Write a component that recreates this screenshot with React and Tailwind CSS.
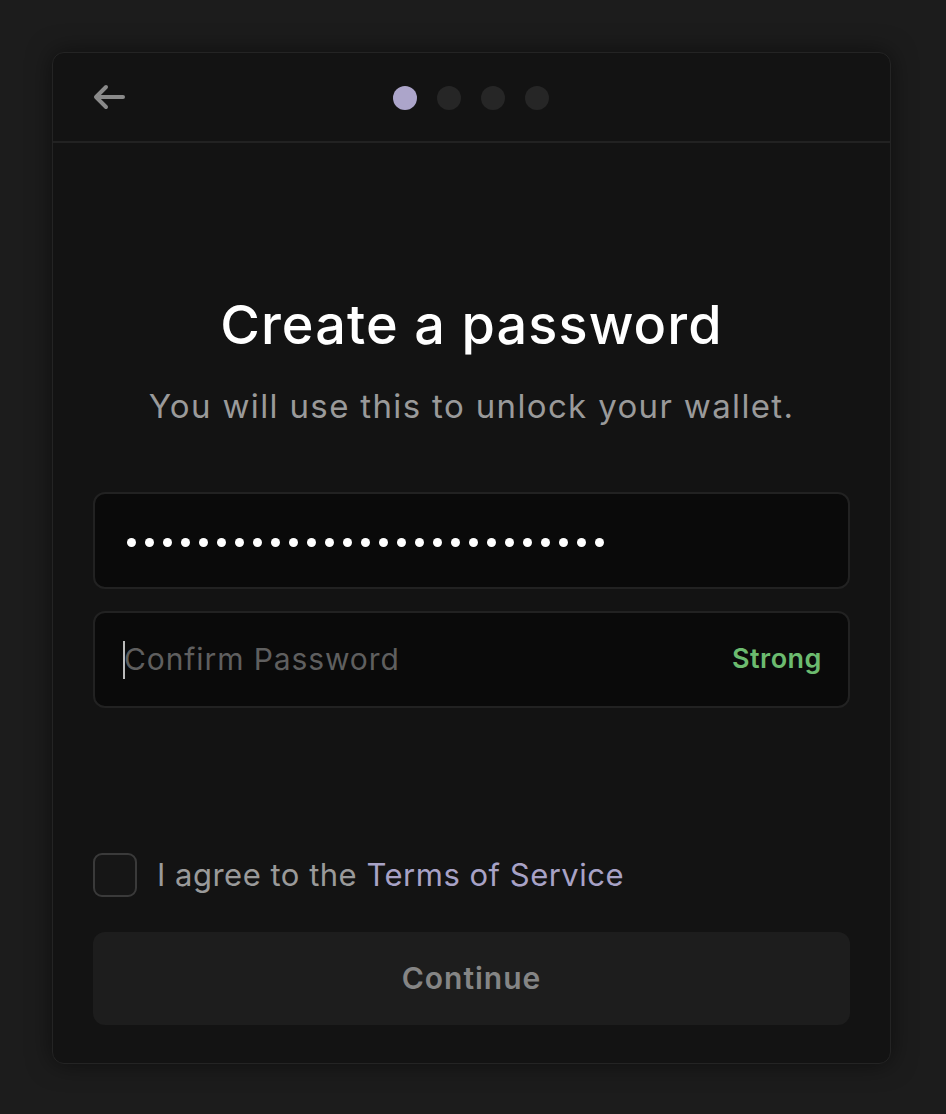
import React from "react";

export default function App() {
  const dots = Array.from({ length: 27 });
  return (
    <div className="w-[946px] h-[1114px] bg-[#1c1c1c] pt-[52px] pl-[52px]" style={{ fontFamily: "Inter, 'Noto Sans', sans-serif" }}>
      <div className="w-[839px] h-[1012px] bg-[#131313] rounded-[12px] border border-[#242424] shadow-[0_0_24px_rgba(0,0,0,0.5)] flex flex-col">
        <div className="h-[90px] border-b-2 border-[#222] flex items-center relative px-[40px]">
          <svg width="32" height="26" viewBox="0 0 32 26" fill="none" stroke="#8a8a8a" strokeWidth="4" strokeLinecap="round" strokeLinejoin="round">
            <path d="M30 13H4" />
            <path d="M13 3L3 13l10 10" />
          </svg>
          <div className="absolute left-[340px] top-[33px] flex gap-[20px]">
            <div className="w-[24px] h-[24px] rounded-full bg-[#aca5ca]" />
            <div className="w-[24px] h-[24px] rounded-full bg-[#262626]" />
            <div className="w-[24px] h-[24px] rounded-full bg-[#262626]" />
            <div className="w-[24px] h-[24px] rounded-full bg-[#262626]" />
          </div>
        </div>
        <div className="flex flex-col px-[40px] flex-1">
          <h1 className="mt-[152px] text-center text-white text-[54px] leading-[60px] font-medium tracking-[1.1px]">Create a password</h1>
          <p className="mt-[31px] text-center text-[#9a9a9a] text-[33px] leading-[40px] tracking-[1.35px]">You will use this to unlock your wallet.</p>
          <div className="mt-[66px] h-[97px] rounded-[12px] bg-[#0a0a0a] border-2 border-[#222] flex items-center pt-[4px] px-[32px] gap-[9px]">
            {dots.map((_, i) => (
              <div key={i} className="w-[9px] h-[9px] shrink-0 rounded-full bg-white" />
            ))}
          </div>
          <div className="mt-[22px] h-[97px] rounded-[12px] bg-[#0a0a0a] border-2 border-[#222] flex items-center pl-[28px] pr-[26px]">
            <div className="w-[2px] h-[38px] bg-[#bbb]" />
            <span className="text-[30px] text-[#5f5f5f] -ml-[1px] tracking-[0.9px]">Confirm Password</span>
            <span className="ml-auto text-[27px] font-semibold text-[#6cbb6f] tracking-[0.5px]">Strong</span>
          </div>
          <div className="mt-[144px] flex items-center gap-[20px]">
            <div className="w-[44px] h-[44px] rounded-[9px] border-2 border-[#3a3a3a] bg-[#161616]" />
            <span className="text-[31px] text-[#9a9a9a] tracking-[0.5px]">I agree to the <span className="text-[#a8a2c6]">Terms of Service</span></span>
          </div>
          <div className="mt-[33px] h-[93px] rounded-[12px] bg-[#1d1d1d] flex items-center justify-center">
            <span className="text-[30px] font-semibold text-[#858585] tracking-[1px]">Continue</span>
          </div>
        </div>
      </div>
    </div>
  );
}
